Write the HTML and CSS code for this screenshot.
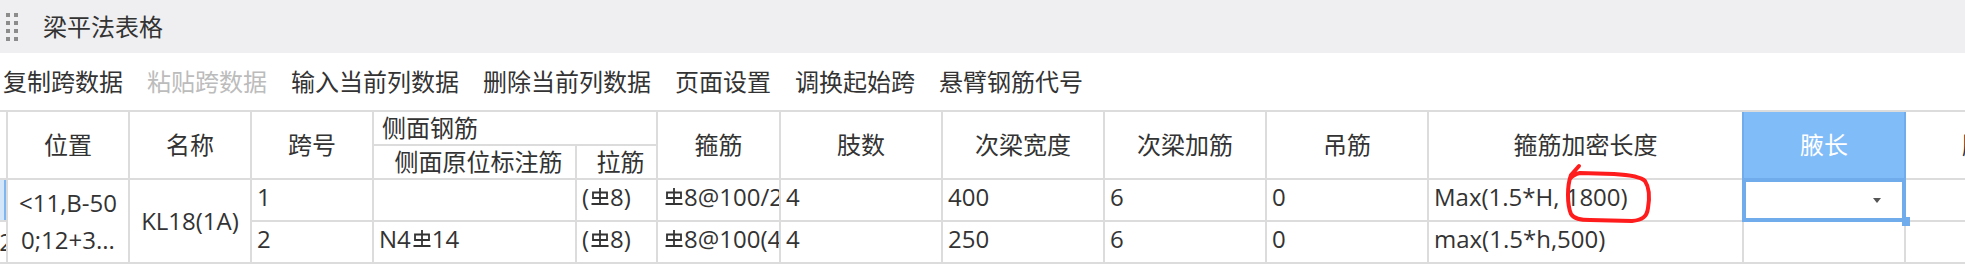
FILE: index.html
```html
<!DOCTYPE html>
<html lang="zh-CN">
<head>
<meta charset="utf-8">
<title>梁平法表格</title>
<link rel="stylesheet" href="styles.css">
</head>
<body>
<div class="titlebar">
  <div class="grip"><i></i><i></i><i></i><i></i><i></i><i></i><i></i><i></i></div>
  <span class="title">梁平法表格</span>
</div>
<div class="toolbar">
  <span>复制跨数据</span>
  <span class="off">粘贴跨数据</span>
  <span>输入当前列数据</span>
  <span>删除当前列数据</span>
  <span>页面设置</span>
  <span>调换起始跨</span>
  <span>悬臂钢筋代号</span>
</div>
<div class="table-wrap">
  <div class="grid">
    <div class="c rh span2"></div>
    <div class="c hd span2">位置</div>
    <div class="c hd span2">名称</div>
    <div class="c hd span2">跨号</div>
    <div class="c hd grp">侧面钢筋</div>
    <div class="c hd span2">箍筋</div>
    <div class="c hd span2">肢数</div>
    <div class="c hd span2">次梁宽度</div>
    <div class="c hd span2">次梁加筋</div>
    <div class="c hd span2">吊筋</div>
    <div class="c hd span2">箍筋加密长度</div>
    <div class="c hd span2 hsel">腋长</div>
    <div class="c hd span2">腋高</div>
    <div class="c hd sub">侧面原位标注筋</div>
    <div class="c hd sub">拉筋</div>

    <div class="c rh rsel"></div>
    <div class="c pos span2"><span>&lt;11,B-50</span><span>0;12+3...</span></div>
    <div class="c name span2">KL18(1A)</div>
    <div class="c d">1</div>
    <div class="c d"></div>
    <div class="c d">(<svg class="hrb" viewBox="0 0 18 18"><path d="M9 0V16M2 4.5H16M2 10H16M2 3.5V11M16 3.5V11M0.5 16H17.5"/></svg>8)</div>
    <div class="c d"><svg class="hrb" viewBox="0 0 18 18"><path d="M9 0V16M2 4.5H16M2 10H16M2 3.5V11M16 3.5V11M0.5 16H17.5"/></svg>8@100/200(4)</div>
    <div class="c d">4</div>
    <div class="c d">400</div>
    <div class="c d">6</div>
    <div class="c d">0</div>
    <div class="c d">Max(1.5*H, 1800)</div>
    <div class="c csel"><span class="arrow"></span><span class="handle"></span></div>
    <div class="c d"></div>

    <div class="c rh"><span>2</span></div>
    <div class="c d">2</div>
    <div class="c d">N4<svg class="hrb" viewBox="0 0 18 18"><path d="M9 0V16M2 4.5H16M2 10H16M2 3.5V11M16 3.5V11M0.5 16H17.5"/></svg>14</div>
    <div class="c d">(<svg class="hrb" viewBox="0 0 18 18"><path d="M9 0V16M2 4.5H16M2 10H16M2 3.5V11M16 3.5V11M0.5 16H17.5"/></svg>8)</div>
    <div class="c d"><svg class="hrb" viewBox="0 0 18 18"><path d="M9 0V16M2 4.5H16M2 10H16M2 3.5V11M16 3.5V11M0.5 16H17.5"/></svg>8@100(4)</div>
    <div class="c d">4</div>
    <div class="c d">250</div>
    <div class="c d">6</div>
    <div class="c d">0</div>
    <div class="c d">max(1.5*h,500)</div>
    <div class="c d"></div>
    <div class="c d"></div>
  </div>
</div>
<svg class="annot" viewBox="0 0 1965 267" width="1965" height="267">
  <path d="M1579 166 L1571 175 C1567 186 1567 204 1571 214 C1574 219 1580 220 1590 220 L1632 221 C1642 220 1647 217 1648 208 C1650 196 1649 187 1645 181 C1641 177 1632 175 1614 174 L1580 173 C1575 174 1572 176 1570 179"/>
</svg>
</body>
</html>
```

FILE: styles.css
```css
* { box-sizing: border-box; }
html, body { margin: 0; padding: 0; }
body {
  width: 1965px;
  height: 267px;
  overflow: hidden;
  position: relative;
  background: #ffffff;
  color: #333333;
  font-family: "Open Sans", "Noto Sans CJK SC", sans-serif;
}

.titlebar {
  height: 53px;
  background: #efeff1;
  display: flex;
  align-items: center;
  padding-left: 6px;
}
.grip {
  display: grid;
  grid-template-columns: 4px 4px;
  grid-auto-rows: 4px;
  gap: 4px;
}
.grip i { background: #8c8c8c; }
.title {
  margin-left: 25px;
  font-size: 24px;
  line-height: 32px;
  color: #333;
}

.toolbar {
  height: 57px;
  display: flex;
  align-items: center;
  gap: 24px;
  padding-left: 3px;
  font-size: 24px;
  line-height: 32px;
  color: #333;
}
.toolbar .off { color: #bcbcbc; }

.table-wrap {
  width: 1965px;
  overflow: hidden;
}
.grid {
  display: grid;
  width: max-content;
  grid-template-columns: 6px 120px 120px 120px 201px 79px 121px 160px 160px 160px 160px 313px 160px 160px;
  grid-template-rows: 32px 32px 40px 40px;
  gap: 2px;
  padding: 2px 0;
  background: #dcdcdc;
}
.c {
  background: #fff;
  display: flex;
  align-items: center;
  font-size: 24px;
  line-height: 30px;
  white-space: nowrap;
  overflow: hidden;
  min-width: 0;
}
.span2 { grid-row: span 2; }
.hd { justify-content: center; }
.grp { grid-column: span 2; justify-content: flex-start; padding-left: 8px; }
.sub { padding-left: 8px; }
.d {
  display: block;
  padding-left: 5px;
  line-height: 34px;
}

.hsel {
  position: relative;
  z-index: 1;
  overflow: visible;
  background: #80bcf8;
  color: #ffffff;
  box-shadow: -2px 0 0 0 #70acec, 2px 0 0 0 #70acec, 0 2px 0 0 #70acec;
}

.rh {
  justify-content: flex-end;
  color: #333;
}
.rh span { margin-right: -7px; }
.rsel {
  background: linear-gradient(to right, #d4e6fa 0 4px, #7fb6ef 4px 6px);
}

.pos {
  flex-direction: column;
  justify-content: center;
  align-items: center;
  line-height: 37px;
}
.name { justify-content: center; }

.hrb {
  width: 18px;
  height: 18px;
  margin: 0 1px 0 2px;
  fill: none;
  stroke: #333;
  stroke-width: 1.8;
}

.csel {
  position: relative;
  z-index: 2;
  overflow: visible;
  justify-content: flex-end;
  padding-right: 23px;
  box-shadow: 0 0 0 2px #70acec, inset 0 0 0 2px #70acec;
}
.arrow {
  width: 0;
  height: 0;
  border-top: 5px solid #555;
  border-left: 4px solid transparent;
  border-right: 4px solid transparent;
}
.handle {
  position: absolute;
  right: -6px;
  bottom: -6px;
  width: 8px;
  height: 9px;
  background: #70acec;
}

.annot {
  position: absolute;
  left: 0;
  top: 0;
  pointer-events: none;
}
.annot path {
  fill: none;
  stroke: #ff1c1c;
  stroke-width: 4;
  stroke-linecap: round;
  stroke-linejoin: round;
}
```
